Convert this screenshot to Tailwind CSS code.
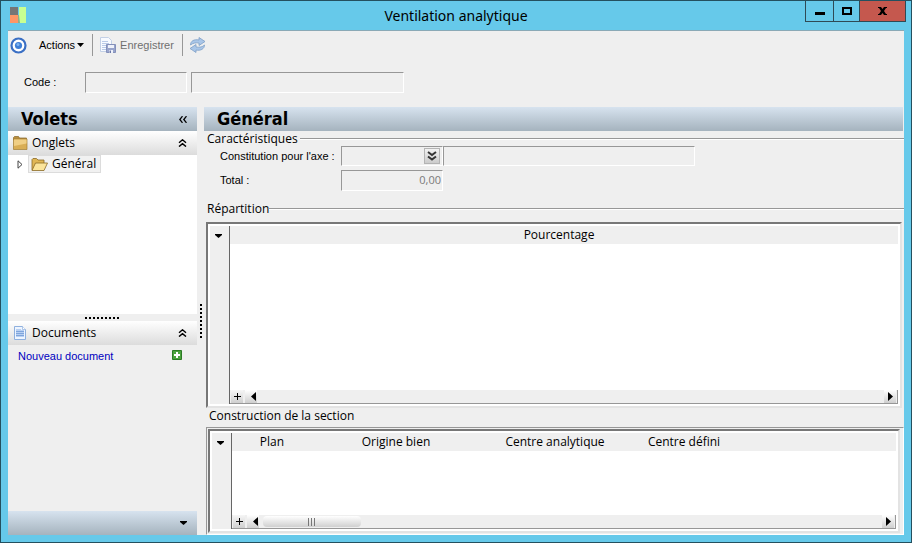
<!DOCTYPE html>
<html lang="fr">
<head>
    <meta charset="UTF-8">
    <meta name="viewport" content="width=device-width, initial-scale=1.0">
    <title>Ventilation analytique</title>
    <script src="https://cdn.jsdelivr.net/npm/@tailwindcss/browser@4"></script>
</head>
<body class="h-screen flex flex-col overflow-hidden border border-[#24505f] bg-[#66c9ea] font-['Open_Sans',sans-serif] text-xs text-black">

    <!-- Title bar -->
    <header class="relative h-[29px] shrink-0 flex items-center justify-center">
        <svg class="absolute left-[9px] top-1.5" width="16" height="16" viewBox="0 0 16 16">
            <path fill="#767676" d="M0 0h8v8H0z"/>
            <path fill="#ff9666" d="M0 8h8v8H0z"/>
            <path fill="#c8ff91" d="M9 0h7v16H9z"/>
            <path fill="#8fae8c" d="M8 8h1l1 8H8z"/>
        </svg>
        <h1 class="font-['Noto_Sans',sans-serif] text-sm leading-[29px]">Ventilation analytique</h1>
        <div class="absolute right-[5px] -top-px flex h-[22px] border border-[#2f4a55]">
            <button aria-label="Réduire" class="w-7 flex items-center justify-center border-r border-[#2f4a55]">
                <svg width="10" height="10" viewBox="0 0 10 10"><path d="M0 6h10v3H0z"/></svg>
            </button>
            <button aria-label="Agrandir" class="w-[26px] flex items-center justify-center border-r border-[#2f4a55]">
                <svg width="10" height="8" viewBox="0 0 10 8"><path fill="none" stroke="#000" stroke-width="2" d="M1 1h8v6H1z"/></svg>
            </button>
            <button aria-label="Fermer" class="w-[45px] flex items-center justify-center bg-[#c5584e]">
                <svg width="9" height="8" viewBox="0 0 9 8"><path d="M0 0h3l1.500 2L6 0h3v1H8L6 4l2 3h1v1H6L4.500 6 3 8H0V7h1l2-3-2-3H0z"/></svg>
            </button>
        </div>
    </header>

    <div class="flex-1 min-h-0 mx-[7px] mb-[7px] flex flex-col border-t border-[#8aa9b6] bg-[#efefef]">

        <!-- Toolbar -->
        <nav class="h-7 shrink-0 flex items-center pl-0.5 font-['Liberation_Sans',sans-serif] text-[11px]">
            <svg class="mr-3" width="17" height="17" viewBox="0 0 17 17">
                <circle cx="8.500" cy="8.500" r="7" fill="#fff" stroke="#3a6fc4" stroke-width="2.200"/>
                <circle cx="8.500" cy="8.500" r="3.600" fill="#3f7fd6"/>
                <circle cx="8" cy="7.500" r="1.500" fill="#7fb4f0"/>
            </svg>
            <button class="flex items-center gap-0.5">
                Actions
                <svg width="7" height="4" viewBox="0 0 7 4"><path d="M0 0h7L3.500 4z"/></svg>
            </button>
            <span class="w-px h-[22px] ml-2 bg-[#979797]"></span>
            <button class="flex items-center gap-1 ml-[7px] text-[#6f6f6f]" disabled>
                <svg width="16" height="16" viewBox="0 0 16 16">
                    <path fill="#f7faff" stroke="#c3d0e6" d="M.5.5h8l3 3v11H.5z"/>
                    <path stroke="#b9cae8" d="M2 4.500h6M2 6.500h7M2 8.500h4M2 10.500h4M2 12.500h4"/>
                    <path fill="#98a4cc" stroke="#8490ba" d="M6.500 7.500h9v8h-9z"/>
                    <path fill="#eef1fa" d="M8 8h6v3H8zM9 13h4v3H9z"/>
                    <path fill="#6b78a8" d="M9.500 13.500h1.500V16H9.500z"/>
                </svg>
                Enregistrer
            </button>
            <span class="w-px h-[22px] ml-2 bg-[#979797]"></span>
            <button class="ml-1.5" aria-label="Actualiser">
                <svg width="17" height="16" viewBox="0 0 17 16" fill="#a9c6e8" stroke="#7f9fc6" stroke-width=".8" stroke-linejoin="round">
                    <path d="M1.500 8C1.500 4 5 2 10 3V.5L16 4.500l-6 4V6C7 5.500 4 6 1.500 8z"/>
                    <path d="M15.500 8c0 4-4 6-8.500 5v2.500L1 11.500l6-4V10c4 .5 6.500 0 8.500-2z"/>
                </svg>
            </button>
        </nav>

        <!-- Code -->
        <form class="shrink-0 flex items-center pt-[13px] pb-3.5 pl-4 font-['Liberation_Sans',sans-serif] text-[11px]">
            <label for="code" class="w-[61px]">Code :</label>
            <input id="code" type="text" class="w-[102px] h-[21px] mr-1 border border-t-[#979797] border-l-[#979797] border-r-white border-b-white" readonly>
            <input type="text" aria-label="Libellé du code" class="w-[213px] h-[21px] border border-t-[#979797] border-l-[#979797] border-r-white border-b-white" readonly>
        </form>

        <div class="flex-1 min-h-0 flex">

            <!-- Left panel -->
            <aside class="w-[189px] shrink-0 flex flex-col">
                <div class="h-6 shrink-0 flex items-center justify-between pl-[13px] pr-2.5 bg-linear-to-b from-[#d7e3ef] to-[#a5b3be]">
                    <h2 class="font-['DejaVu_Sans_Condensed','DejaVu_Sans',sans-serif] text-lg leading-6 font-bold">Volets</h2>
                    <button aria-label="Replier">
                        <svg width="8" height="7" viewBox="0 0 8 7" fill="none" stroke="#000" stroke-width="1.300"><path d="M3.500.2.8 3.500l2.700 3.300M7.500.2 4.800 3.500l2.700 3.300"/></svg>
                    </button>
                </div>
                <div class="h-6 shrink-0 flex items-center pl-[5px] pr-2.5 bg-linear-to-b from-white to-[#dcdcdc]">
                    <svg class="mr-1" width="15" height="14" viewBox="0 0 15 14">
                        <path fill="#b98f3e" stroke="#85662a" stroke-width=".7" d="M.5 1.500 1.500.5h4l1 1.500h7v2H.5z"/>
                        <path fill="#d9ae55" stroke="#a17c33" stroke-width=".7" d="M.5 3h13.500v10.500H.5z"/>
                        <path fill="#f0cf85" d="M1 3.500h12.500v4L1 10z"/>
                    </svg>
                    <h3>Onglets</h3>
                    <button class="ml-auto" aria-label="Replier Onglets">
                        <svg width="9" height="8" viewBox="0 0 9 8" fill="none" stroke="#000" stroke-width="1.400"><path d="M1 3.800 4.500.8 8 3.800M1 7.600l3.500-3L8 7.600"/></svg>
                    </button>
                </div>
                <ul class="h-[159px] shrink-0 bg-white">
                    <li class="flex items-center pl-[9px]">
                        <svg class="mr-1" width="7" height="9" viewBox="0 0 7 9"><path fill="#fff" stroke="#444" d="M1 .8v7.400l4-3.700z"/></svg>
                        <a href="#" class="h-[18px] flex items-center gap-1 px-1 border border-[#dcdcdc] bg-[#f1f1f1]">
                            <svg class="-ml-0.5" width="17" height="13" viewBox="0 0 17 13" stroke-linejoin="round">
                                <path fill="#e0b654" stroke="#8a6a26" stroke-width=".8" d="M1 12V1.500L2 .5h3.500L7 2h6v3"/>
                                <path fill="#fbe49a" stroke="#8a6a26" stroke-width=".8" d="M1 12.500 4.500 5H16.500l-3.500 7.500z"/>
                            </svg>
                            Général
                        </a>
                    </li>
                </ul>
                <div class="h-[7px] shrink-0 flex items-center justify-center">
                    <span class="w-[35px] h-0.5 bg-[repeating-linear-gradient(90deg,#000_0_2px,transparent_2px_4px)]"></span>
                </div>
                <div class="h-6 shrink-0 flex items-center pl-1.5 pr-2.5 bg-linear-to-b from-white to-[#dcdcdc]">
                    <svg class="mr-1.5" width="12" height="14" viewBox="0 0 12 14">
                        <path fill="#eef5ff" stroke="#8fb0de" d="M.5.500h8l3 3v10H.5z"/>
                        <path fill="#fff" stroke="#8fb0de" stroke-width=".7" d="M8.500.500v3h3"/>
                        <path fill="#b9d0f2" d="M2 3h5v1h3v7H2z"/>
                        <path stroke="#7fa5dc" d="M2 5.500h8M2 7.500h8M2 9.500h8"/>
                    </svg>
                    <h3>Documents</h3>
                    <button class="ml-auto" aria-label="Replier Documents">
                        <svg width="9" height="8" viewBox="0 0 9 8" fill="none" stroke="#000" stroke-width="1.400"><path d="M1 3.800 4.500.8 8 3.800M1 7.600l3.500-3L8 7.600"/></svg>
                    </button>
                </div>
                <div class="flex-1 min-h-0 flex items-start justify-between pt-1 pl-2.5 pr-[15px]">
                    <a href="#" class="font-['Liberation_Sans',sans-serif] text-[11px] leading-[14px] text-[#0000c0]">Nouveau document</a>
                    <button aria-label="Ajouter un document" class="mt-px">
                        <svg width="10" height="10" viewBox="0 0 10 10"><path fill="#4ba33e" stroke="#2c7a25" d="M.5.500h9v9h-9z"/><path fill="#fff" d="M4 2h2v2h2v2H6v2H4V6H2V4h2z"/></svg>
                    </button>
                </div>
                <div class="h-6 shrink-0 flex items-center justify-end pr-2.5 bg-linear-to-b from-[#d7e3ef] to-[#a5b3be]">
                    <button aria-label="Plus de volets">
                        <svg width="7" height="4" viewBox="0 0 7 4"><path d="M0 0h7v1L3.500 4 0 1z"/></svg>
                    </button>
                </div>
            </aside>

            <!-- Vertical splitter -->
            <div class="w-[7px] shrink-0 flex items-center justify-center">
                <span class="w-0.5 h-[34px] bg-[repeating-linear-gradient(180deg,#000_0_2px,transparent_2px_4px)]"></span>
            </div>

            <!-- Main panel -->
            <main class="flex-1 min-w-0 flex flex-col">
                <div class="h-6 shrink-0 flex items-center pl-[13px] mr-px bg-linear-to-b from-[#d7e3ef] to-[#a5b3be]">
                    <h2 class="font-['DejaVu_Sans_Condensed','DejaVu_Sans',sans-serif] text-lg leading-6 font-bold">Général</h2>
                </div>

                <section class="h-[70px] shrink-0">
                    <div class="h-[15px] flex items-center gap-0.5 pl-[3px]">
                        <h3 class="leading-4">Caractéristiques</h3>
                        <span class="flex-1 h-0.5 border-t border-[#979797] border-b border-b-white"></span>
                    </div>
                    <div class="flex items-center pl-4 font-['Liberation_Sans',sans-serif] text-[11px]">
                        <label for="axe" class="w-[121px]">Constitution pour l'axe :</label>
                        <div class="w-[102px] h-5 flex items-center border border-t-[#979797] border-l-[#979797] border-r-white border-b-white">
                            <input id="axe" type="text" class="flex-1 min-w-0" readonly>
                            <button aria-label="Choisir un axe" class="size-4 mr-0.5 flex items-center justify-center border border-[#b4b4b4] bg-linear-to-b from-[#f2f2f2] to-[#cccccc]">
                                <svg width="10" height="10" viewBox="0 0 10 10" fill="none" stroke="#333" stroke-width="2"><path d="m1 1 4 3 4-3M1 5.500l4 3 4-3"/></svg>
                            </button>
                        </div>
                        <input type="text" aria-label="Libellé de l'axe" class="w-[252px] h-5 border border-t-[#979797] border-l-[#979797] border-r-white border-b-white" readonly>
                    </div>
                    <div class="flex items-center mt-1 pl-4 font-['Liberation_Sans',sans-serif] text-[11px]">
                        <label for="total" class="w-[121px]">Total :</label>
                        <input id="total" type="text" value="0,00" class="w-[102px] h-[21px] pb-0.5 pr-px border border-t-[#979797] border-l-[#979797] border-r-white border-b-white text-right font-['Open_Sans',sans-serif] text-[11px] text-[#7a7a7a]" readonly>
                    </div>
                </section>

                <section class="flex-1 min-h-0 flex flex-col">
                    <div class="h-[15px] shrink-0 flex items-center pl-[3px]">
                        <h3 class="leading-4">Répartition</h3>
                        <span class="flex-1 h-0.5 border-t border-[#979797] border-b border-b-white"></span>
                    </div>
                    <div class="flex-1 min-h-0 flex mt-1.5 ml-0.5 mr-0.5 p-0.5 bg-white border-2 border-t-[#777] border-l-[#777] border-r-[#e3e3e3] border-b-[#e3e3e3]">
                        <div class="w-5 shrink-0 flex justify-center pt-2 pr-0.5 border-r border-[#666] bg-[#efefef]">
                            <svg width="7" height="4" viewBox="0 0 7 4"><path d="M0 0h7v1L3.500 4 0 1z"/></svg>
                        </div>
                        <div class="flex-1 min-w-0 flex flex-col">
                            <table class="w-full">
                                <thead>
                                    <tr class="h-[18px] bg-[#efefef]">
                                        <th class="p-0 pr-2.5 font-normal leading-[18px]">Pourcentage</th>
                                    </tr>
                                </thead>
                            </table>
                            <div class="mt-auto h-3.5 shrink-0 flex items-center border-b border-r border-[#979797] bg-[#efefef]">
                                <button aria-label="Ajouter une ligne" class="w-3 h-full mr-0.5 ml-px flex items-center justify-center bg-linear-to-b from-[#f6f6f6] to-[#cfcfcf]">
                                    <svg width="7" height="7" viewBox="0 0 7 7"><path d="M3 0h1v3h3v1H4v3H3V4H0V3h3z"/></svg>
                                </button>
                                <button aria-label="Défiler à gauche" class="w-3 h-full flex items-center justify-end pr-px bg-linear-to-b from-white to-[#cfcfcf]">
                                    <svg width="5" height="9" viewBox="0 0 5 9"><path d="M5 0v9L0 4.500z"/></svg>
                                </button>
                                <button aria-label="Défiler à droite" class="ml-auto mr-px w-3 h-full flex items-center justify-center bg-linear-to-b from-white to-[#cfcfcf]">
                                    <svg width="5" height="9" viewBox="0 0 5 9"><path d="M0 0v9l5-4.500z"/></svg>
                                </button>
                            </div>
                        </div>
                    </div>
                </section>

                <section class="shrink-0">
                    <h3 class="h-[19px] pl-[5px] leading-4">Construction de la section</h3>
                    <div class="h-[108px] ml-0.5 border border-t-[#979797] border-l-[#979797] border-white p-px">
                        <div class="h-[104px] flex mr-0.5 p-0.5 bg-white border-2 border-t-[#777] border-l-[#777] border-r-[#e3e3e3] border-b-[#e3e3e3]">
                            <div class="w-5 shrink-0 flex justify-center pt-2 pr-0.5 border-r border-[#666] bg-[#efefef]">
                                <svg width="7" height="4" viewBox="0 0 7 4"><path d="M0 0h7v1L3.500 4 0 1z"/></svg>
                            </div>
                            <div class="flex-1 min-w-0 flex flex-col">
                                <table class="w-full table-fixed">
                                    <thead>
                                        <tr class="h-[18px] bg-[#efefef]">
                                            <th class="w-20 p-0 font-normal leading-[18px]">Plan</th>
                                            <th class="w-[168px] p-0 font-normal leading-[18px]">Origine bien</th>
                                            <th class="w-[150px] p-0 font-normal leading-[18px]">Centre analytique</th>
                                            <th class="w-[108px] p-0 font-normal leading-[18px]">Centre défini</th>
                                            <th class="p-0"></th>
                                        </tr>
                                    </thead>
                                </table>
                                <div class="mt-auto h-3.5 shrink-0 flex items-center border-b border-r border-[#979797] bg-[#efefef]">
                                    <button aria-label="Ajouter une ligne" class="w-3 h-full mr-0.5 ml-px flex items-center justify-center bg-linear-to-b from-[#f6f6f6] to-[#cfcfcf]">
                                        <svg width="7" height="7" viewBox="0 0 7 7"><path d="M3 0h1v3h3v1H4v3H3V4H0V3h3z"/></svg>
                                    </button>
                                    <button aria-label="Défiler à gauche" class="w-3 h-full flex items-center justify-end pr-px bg-linear-to-b from-white to-[#cfcfcf]">
                                        <svg width="5" height="9" viewBox="0 0 5 9"><path d="M5 0v9L0 4.500z"/></svg>
                                    </button>
                                    <div class="w-[98px] h-[11px] ml-1 flex items-center justify-center rounded-sm bg-linear-to-b from-white to-[#d0d0d0]">
                                        <svg width="8" height="8" viewBox="0 0 8 8"><path stroke="#777" d="M.5 0v8M3.500 0v8M6.500 0v8"/></svg>
                                    </div>
                                    <button aria-label="Défiler à droite" class="ml-auto mr-px w-3 h-full flex items-center justify-center bg-linear-to-b from-white to-[#cfcfcf]">
                                        <svg width="5" height="9" viewBox="0 0 5 9"><path d="M0 0v9l5-4.500z"/></svg>
                                    </button>
                                </div>
                            </div>
                        </div>
                    </div>
                </section>
            </main>
        </div>
    </div>
</body>
</html>
